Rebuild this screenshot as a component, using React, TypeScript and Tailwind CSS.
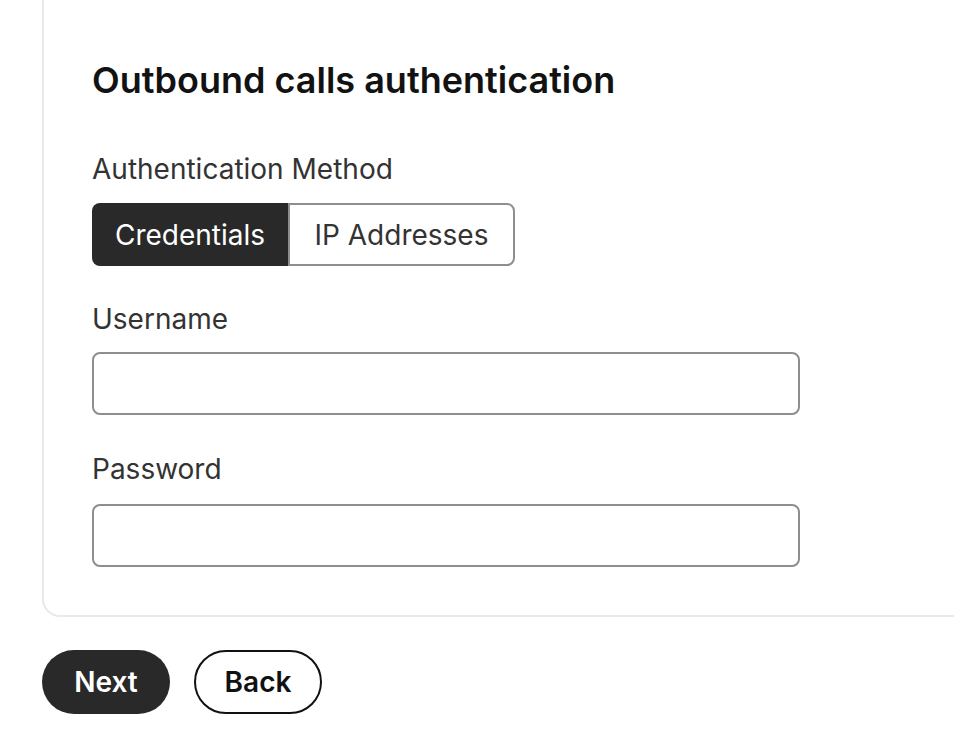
import React from "react";

export default function App() {
  return (
    <div className="min-h-[742px] w-[954px] overflow-hidden bg-white text-[#111111]" style={{ fontFamily: "Inter, 'Noto Sans', sans-serif" }}>
      <div className="ml-[42px] w-[1000px] rounded-bl-[18px] border-b-2 border-l-2 border-[#e9e9e9] pb-[48px] pl-[48px] pt-[58px]">
        <h1 className="text-[36px] font-semibold leading-[44px] text-[#121212]">Outbound calls authentication</h1>
        <div className="mt-[50px] text-[28px] leading-[34px] text-[#333333]">Authentication Method</div>
        <div className="mt-[17px] flex h-[63px] w-[423px]">
          <button className="flex w-[196px] items-center justify-center rounded-l-[8px] bg-[#292929] text-[28px] text-white">Credentials</button>
          <button className="flex w-[227px] items-center justify-center rounded-r-[8px] border-2 border-[#8e8e8e] bg-white text-[28px] text-[#333333]">IP Addresses</button>
        </div>
        <div className="mt-[36px] text-[28px] leading-[34px] text-[#333333]">Username</div>
        <input className="mt-[16px] block h-[63px] w-[708px] rounded-[8px] border-2 border-[#8e8e8e] bg-white outline-none" />
        <div className="mt-[37px] text-[28px] leading-[34px] text-[#333333]">Password</div>
        <input type="password" className="mt-[18px] block h-[63px] w-[708px] rounded-[8px] border-2 border-[#8e8e8e] bg-white outline-none" />
      </div>
      <div className="ml-[42px] mt-[33px] flex gap-[24px]">
        <button className="h-[64px] w-[128px] rounded-full bg-[#292929] text-[28px] font-semibold text-white">Next</button>
        <button className="h-[64px] w-[128px] rounded-full border-2 border-[#111111] bg-white text-[28px] font-semibold text-[#111111]">Back</button>
      </div>
    </div>
  );
}
